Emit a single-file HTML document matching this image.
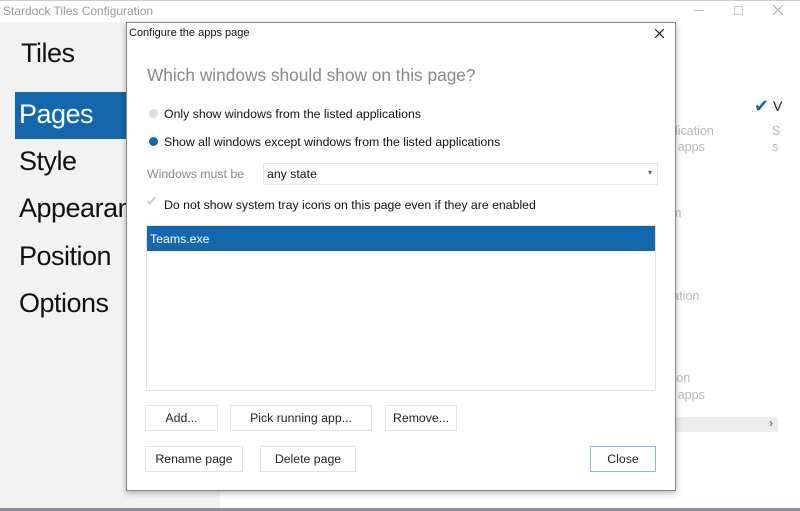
<!DOCTYPE html>
<html><head><style>
body{margin:0;width:800px;height:511px;overflow:hidden;font-family:"Liberation Sans",sans-serif;background:#fff;position:relative}
.a{position:absolute;white-space:nowrap}
.side{left:0;top:22px;width:220px;height:487px;background:#f2f2f2}
.nav{font-size:27px;color:#111;left:19px;letter-spacing:-0.5px}
.bg{color:#b8b8b8;font-size:12.5px}
.t{font-size:12.3px;color:#111}
.btn{position:absolute;border:1px solid #e3e3e3;background:#fff;font-size:12.3px;color:#222;text-align:center;box-sizing:border-box;line-height:24px}
</style></head><body>
<div class="a" style="left:0;top:0;width:800px;height:22px;background:#fff;border-top:1px solid #ccc"></div>
<div class="a" style="left:3px;top:4px;font-size:12px;color:#999">Stardock Tiles Configuration</div>
<div class="a" style="left:694px;top:10px;width:10px;height:1px;background:#bbb"></div>
<div class="a" style="left:734px;top:6px;width:7px;height:7px;border:1px solid #ccc"></div>
<svg class="a" style="left:773px;top:5px" width="10" height="10"><path d="M0 0L10 10M10 0L0 10" stroke="#aaa" stroke-width="1"/></svg>
<div class="a side"></div>
<div class="a" style="left:0;top:508px;width:800px;height:3px;background:#8a8f99"></div>
<div class="a nav" style="left:21px;top:38px">Tiles</div>
<div class="a" style="left:15px;top:92px;width:112px;height:47px;background:#1467aa"></div>
<div class="a nav" style="top:99px;color:#fff">Pages</div>
<div class="a nav" style="top:146px">Style</div>
<div class="a nav" style="top:193px">Appearance</div>
<div class="a nav" style="top:241px">Position</div>
<div class="a nav" style="top:288px">Options</div>
<div class="a" style="left:754px;top:96px;color:#1467aa;font-size:18px">✔</div>
<div class="a" style="left:773px;top:98px;font-size:14px;color:#222">V</div>
<div class="a bg" style="left:668px;top:124px">plication</div>
<div class="a bg" style="left:668px;top:140px">c apps</div>
<div class="a bg" style="left:772px;top:124px">S</div>
<div class="a bg" style="left:772px;top:140px">s</div>
<div class="a bg" style="left:664px;top:206px">om</div>
<div class="a bg" style="left:666px;top:289px">cation</div>
<div class="a bg" style="left:670px;top:371px">tion</div>
<div class="a bg" style="left:668px;top:388px">c apps</div>
<div class="a" style="left:674px;top:417px;width:104px;height:15px;background:#ededed"></div>
<div class="a" style="left:769px;top:416px;font-size:12px;color:#555">›</div>

<div class="a" style="left:126px;top:22px;width:548px;height:467px;background:#fff;border:1px solid #888;box-shadow:0 2px 6px rgba(0,0,0,.3)">
<div class="a" style="left:2px;top:4px;font-size:11px;color:#111">Configure the apps page</div>
<svg class="a" style="left:528px;top:6px" width="9" height="9"><path d="M0 0L9 9M9 0L0 9" stroke="#222" stroke-width="1.2"/></svg>
<div class="a" style="left:20px;top:42px;font-size:17.3px;color:#888">Which windows should show on this page?</div>
<div class="a" style="left:22px;top:86px;width:9px;height:9px;border-radius:50%;background:#ddd"></div>
<div class="a t" style="left:37px;top:84px">Only show windows from the listed applications</div>
<div class="a" style="left:22px;top:114px;width:9px;height:9px;border-radius:50%;background:#1467aa"></div>
<div class="a t" style="left:37px;top:112px">Show all windows except windows from the listed applications</div>
<div class="a" style="left:20px;top:144px;font-size:12.3px;color:#888">Windows must be</div>
<div class="a" style="left:136px;top:140px;width:395px;height:22px;border:1px solid #e6e6e6;box-sizing:border-box"></div>
<div class="a t" style="left:140px;top:144px">any state</div>
<div class="a" style="left:521px;top:145px;font-size:8px;color:#666">▾</div>
<div class="a" style="left:19px;top:170px;font-size:14px;color:#ccc">✔</div>
<div class="a t" style="left:37px;top:175px">Do not show system tray icons on this page even if they are enabled</div>
<div class="a" style="left:19px;top:202px;width:510px;height:166px;border:1px solid #e3e3e3;box-sizing:border-box"></div>
<div class="a" style="left:20px;top:203px;width:508px;height:25px;background:#1467aa"></div>
<div class="a t" style="left:23px;top:209px;color:#fff">Teams.exe</div>
</div>
<div class="btn" style="left:145px;top:405px;width:73px;height:26px">Add...</div>
<div class="btn" style="left:230px;top:405px;width:142px;height:26px">Pick running app...</div>
<div class="btn" style="left:385px;top:405px;width:72px;height:26px">Remove...</div>
<div class="btn" style="left:145px;top:446px;width:98px;height:26px">Rename page</div>
<div class="btn" style="left:260px;top:446px;width:96px;height:26px">Delete page</div>
<div class="btn" style="left:590px;top:446px;width:66px;height:26px;border-color:#8db8dc">Close</div>
</body></html>
